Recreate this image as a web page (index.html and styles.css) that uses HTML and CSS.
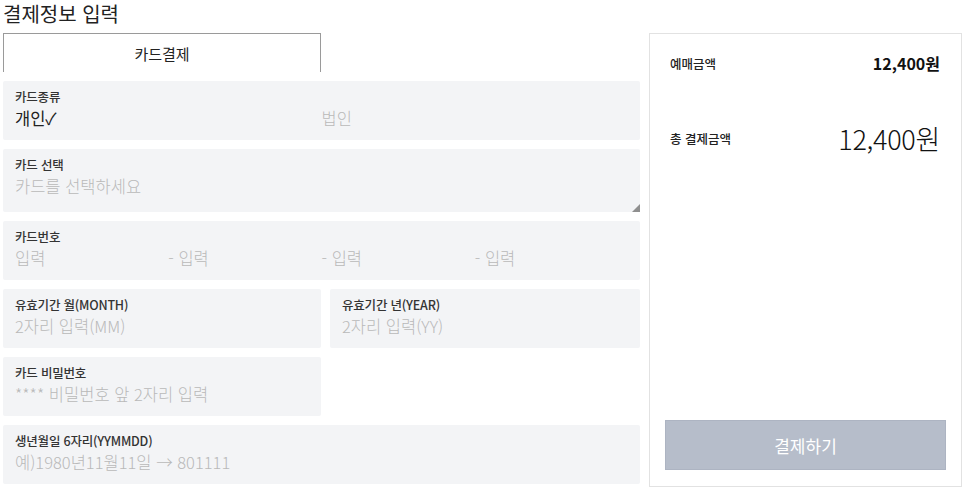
FILE: index.html
```html
<!DOCTYPE html>
<html lang="ko">
<head>
<meta charset="utf-8">
<title>결제정보 입력</title>
<link rel="stylesheet" href="styles.css">
</head>
<body>
<h1 class="title">결제정보 입력</h1>
<div class="layout">
  <div class="form">
    <div class="tabs"><div class="tab">카드결제</div></div>
    <div class="field">
      <div class="label">카드종류</div>
      <div class="two">
        <span class="val on">개인✓</span>
        <span class="val">법인</span>
      </div>
    </div>
    <div class="field textarea">
      <div class="label">카드 선택</div>
      <div class="val">카드를 선택하세요</div>
      <span class="grip"></span>
    </div>
    <div class="field">
      <div class="label">카드번호</div>
      <div class="four">
        <span class="val">입력</span>
        <span class="val">- 입력</span>
        <span class="val">- 입력</span>
        <span class="val">- 입력</span>
      </div>
    </div>
    <div class="row">
      <div class="field half">
        <div class="label">유효기간 월(MONTH)</div>
        <div class="val">2자리 입력(MM)</div>
      </div>
      <div class="field rest">
        <div class="label">유효기간 년(YEAR)</div>
        <div class="val">2자리 입력(YY)</div>
      </div>
    </div>
    <div class="row">
      <div class="field half">
        <div class="label">카드 비밀번호</div>
        <div class="val">**** 비밀번호 앞 2자리 입력</div>
      </div>
    </div>
    <div class="field">
      <div class="label">생년월일 6자리(YYMMDD)</div>
      <div class="val">예)1980년11월11일 → 801111</div>
    </div>
  </div>
  <aside class="summary">
    <div class="line">
      <span class="k">예매금액</span>
      <span class="v">12,400원</span>
    </div>
    <div class="line total">
      <span class="k">총 결제금액</span>
      <span class="v">12,400원</span>
    </div>
    <div class="spacer"></div>
    <button class="pay">결제하기</button>
  </aside>
</div>
</body>
</html>
```
FILE: styles.css
```css
* { box-sizing: border-box; }
html, body { margin: 0; padding: 0; background: #fff; }
body {
  font-family: "Noto Sans CJK KR", "Noto Sans", sans-serif;
  color: #222;
  width: 967px;
  height: 490px;
  overflow: hidden;
}
.title {
  margin: 0;
  padding-left: 3px;
  font-size: 20px;
  font-weight: 400;
  line-height: 27px;
  height: 33px;
  color: #222;
}
.layout {
  display: flex;
  gap: 9px;
  padding-left: 3px;
}
.form {
  width: 637px;
  display: flex;
  flex-direction: column;
  gap: 9px;
}
.tabs { height: 39px; }
.tab {
  width: 318px;
  height: 39px;
  border: 1px solid #9a9a9a;
  border-bottom: none;
  text-align: center;
  font-size: 15px;
  line-height: 40px;
  color: #222;
}
.field {
  background: #f3f4f6;
  height: 59px;
  padding: 7px 12px 0;
  position: relative;
  border-radius: 2px;
}
.textarea { height: 63px; }
.label {
  font-size: 12.5px;
  font-weight: 500;
  line-height: 18px;
  color: #333;
  height: 19px;
  letter-spacing: -0.2px;
}
.val {
  font-size: 16.5px;
  line-height: 23px;
  color: #b9b9b9;
  font-weight: 300;
  white-space: nowrap;
}
.val.on { color: #222; font-weight: 400; }
.two { display: grid; grid-template-columns: 1fr 1fr; }
.four { display: grid; grid-template-columns: repeat(4, 1fr); }
.row { display: flex; gap: 9px; }
.half { width: 318px; }
.rest { flex: 1; }
.grip {
  position: absolute;
  right: 0;
  bottom: 0;
  width: 0;
  height: 0;
  border-left: 8px solid transparent;
  border-bottom: 8px solid #8f8f8f;
}
.summary {
  width: 313px;
  height: 454px;
  border: 1px solid #e2e2e2;
  display: flex;
  flex-direction: column;
  padding: 0 15px 16px;
}
.line {
  display: flex;
  justify-content: space-between;
  align-items: center;
  padding: 0 6px 0 5px;
}
.line:first-child { margin-top: 16px; height: 26px; }
.k { font-size: 12.5px; font-weight: 500; color: #222; }
.line:first-child .v { font-size: 16px; font-weight: 700; color: #111; }
.total { margin-top: 42px; height: 40px; }
.total .v { font-size: 27px; font-weight: 300; color: #111; letter-spacing: -0.3px; }
.spacer { flex: 1; }
.pay {
  height: 50px;
  width: 100%;
  border: 1px solid #adb4c2;
  background: #b6bdca;
  color: #fff;
  font-family: inherit;
  font-size: 17px;
  font-weight: 400;
}
```
